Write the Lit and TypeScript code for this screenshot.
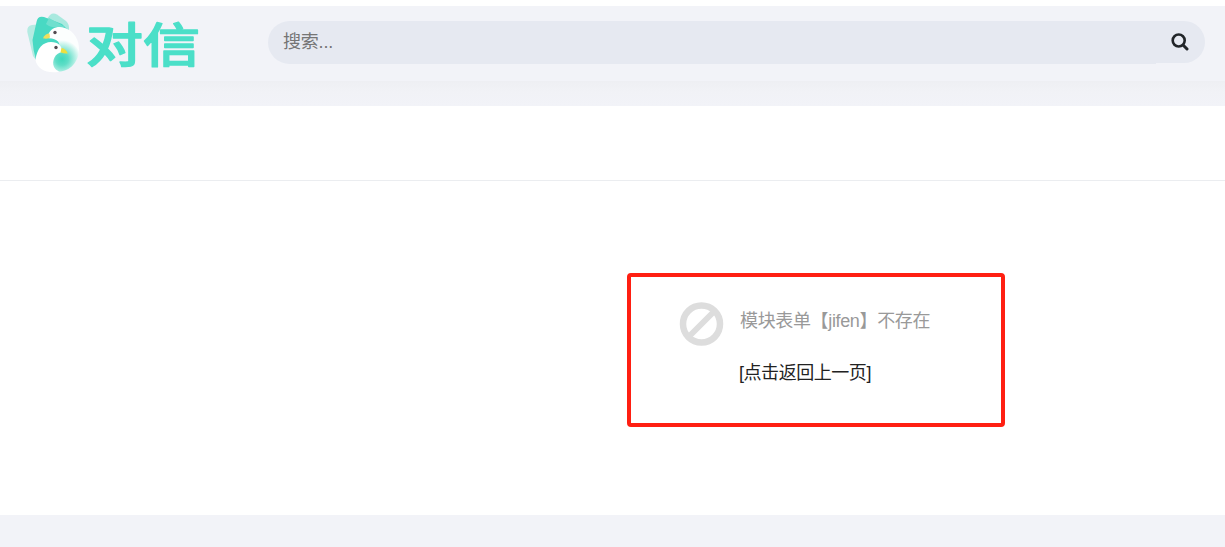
import { LitElement, html, css } from "lit";
import { customElement } from "lit/decorators.js";

@customElement("brand-logo")
class BrandLogo extends LitElement {
  static styles = css`
    :host { display: block; width: 184px; height: 68px; }
    svg { display: block; overflow: visible; }
    text { font-family: "Noto Sans CJK SC", sans-serif; font-weight: 500; }
  `;
  render() {
    return html`<svg width="184" height="68" viewBox="20 10 184 68">
      <defs>
        <radialGradient id="body" gradientUnits="userSpaceOnUse" cx="62" cy="59" r="21">
          <stop offset="0" stop-color="#40d8bc" />
          <stop offset=".3" stop-color="#5fdec7" />
          <stop offset=".9" stop-color="#fcfefe" />
        </radialGradient>
      </defs>
      <path d="M27.300 32Q26.500 26 32 25L42 24L44 56L36 60L33 56Z" fill="#b4ebe2" />
      <path d="M46 20L50 15Q53 12.500 57 14.500L66 21Q69.500 24 69 30L60 36L46 30Z" fill="#a9e9df" />
      <path d="M36.500 22Q37.500 15.500 44 17L62 24L68 30L66 50L54 60L36 60Q33 50 32.500 40Z" fill="#48d9c3" />
      <path d="M49 18L65 27L58 27Q51 28 46 24Z" fill="#6fdfce" />
      <path d="M48.500 34C51 28 58 25.500 65 28C74 31 79.500 40 79 50C78.500 62 70 71.500 59 71.500L50 66L58 50C62 43 57 38 48.500 38.200Z" fill="url(#body)" />
      <path d="M35.500 60C37 48 43 42 51 42C58 42 62.500 46 62 52C55 53 51.500 61 54 67Q55.500 70.500 59 71.800C47 74 37 69 35.500 60Z" fill="#fff" />
      <path d="M43 38.300Q45 33.500 49.500 33.500L50 37.500Q47 39.500 43 38.300Z" fill="#f0df5c" />
      <path d="M61.500 48Q66 48.500 67.800 53.500Q64 54 60.500 52.200Z" fill="#eedf3e" />
      <circle cx="55" cy="32.500" r="1.700" fill="#514b50" />
      <circle cx="56" cy="47.500" r="1.700" fill="#514b50" />
      <text x="0" y="0" font-size="57" fill="#4bdfc8" stroke="#4bdfc8" stroke-width="1.600" stroke-linejoin="round"
        transform="translate(86 61.500) scale(1 .82)">对信</text>
    </svg>`;
  }
}

@customElement("search-bar")
class SearchBar extends LitElement {
  static styles = css`
    :host { display: flex; align-items: flex-start; width: 937px; height: 43px; }
    .field {
      box-sizing: border-box; flex: 1; height: 43px; padding-left: 15px;
      border-radius: 22px 0 0 22px; background: #e6e9f1; color: #757575;
      font-size: 18px; line-height: 43px; letter-spacing: -0.2px;
    }
    .button {
      display: flex; align-items: center; justify-content: center; box-sizing: border-box;
      width: 49px; height: 42px; padding-right: 2px;
      border-radius: 0 21px 21px 0; background: #e6e9f1;
    }
  `;
  render() {
    return html`
      <div class="field">搜索...</div>
      <div class="button">
        <svg width="18" height="18" viewBox="0 0 18 18" fill="none" stroke="#212529" stroke-linecap="round">
          <circle cx="7.7" cy="7.5" r="6" stroke-width="2.6" />
          <path d="M12.3 12.3L16 16" stroke-width="3" />
        </svg>
      </div>`;
  }
}

@customElement("app-root")
class AppRoot extends LitElement {
  static styles = css`
    :host {
      display: flex; flex-direction: column; box-sizing: border-box;
      width: 1225px; height: 547px; padding-top: 6px; overflow: hidden; background: #fff;
      font-family: "Liberation Sans", "Noto Sans CJK SC", sans-serif;
    }
    .header {
      display: flex; align-items: flex-start; flex: none; box-sizing: border-box;
      height: 75px; padding: 4px 0 0 20px; background: #f2f3f8;
    }
    search-bar { margin: 11px 0 0 64px; }
    .shade { flex: none; height: 25px; background: linear-gradient(#eeeff3, #f1f2f6 10px, #f2f3f8); }
    .title { flex: none; height: 74px; border-bottom: 1px solid #ebedf0; }
    .panel { flex: none; box-sizing: border-box; height: 334px; padding: 92px 0 0 627px; }
    .frame {
      display: flex; align-items: flex-start; box-sizing: border-box;
      width: 378px; height: 154px; padding: 25px 0 0 48px;
      border: 4px solid #ff1f12; border-radius: 4px;
    }
    .lines { margin-left: 15px; font-size: 18px; line-height: 26px; letter-spacing: -0.45px; white-space: nowrap; }
    .message { margin-top: 6px; padding-left: 1px; color: #999; letter-spacing: -0.35px; }
    .back { margin-top: 26px; color: #222; }
    .footer { flex: 1; background: #f2f3f8; }
  `;
  render() {
    return html`
      <div class="header">
        <brand-logo></brand-logo>
        <search-bar></search-bar>
      </div>
      <div class="shade"></div>
      <div class="title"></div>
      <div class="panel">
        <div class="frame">
          <svg width="45" height="44" viewBox="-0.5 0 45 44" fill="none" stroke="#ddd" stroke-width="6.500">
            <circle cx="22" cy="22" r="18.500" />
            <path d="M9 35L35 9" stroke-width="6" />
          </svg>
          <div class="lines">
            <div class="message">模块表单【jifen】不存在</div>
            <div class="back">[点击返回上一页]</div>
          </div>
        </div>
      </div>
      <div class="footer"></div>`;
  }
}
